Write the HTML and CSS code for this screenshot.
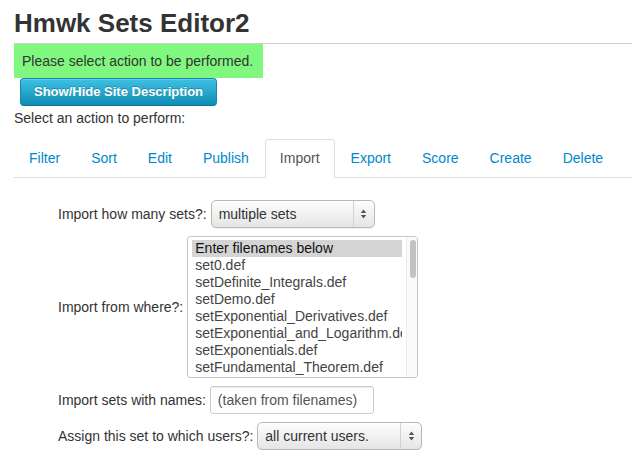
FILE: index.html
```html
<!DOCTYPE html>
<html>
<head>
<meta charset="utf-8">
<title>Hmwk Sets Editor2</title>
<link rel="stylesheet" href="styles.css">
</head>
<body>
<div class="page">
  <div class="header"><h1>Hmwk Sets Editor2</h1></div>
  <div class="message">Please select action to be performed.</div>
  <button class="btn-info" type="button">Show/Hide Site Description</button>
  <p class="intro">Select an action to perform:</p>
  <ul class="tabs">
    <li><a>Filter</a></li>
    <li><a>Sort</a></li>
    <li><a>Edit</a></li>
    <li><a>Publish</a></li>
    <li class="active"><a>Import</a></li>
    <li><a>Export</a></li>
    <li><a>Score</a></li>
    <li><a>Create</a></li>
    <li><a>Delete</a></li>
  </ul>
  <div class="form">
    <div class="row">
      <span class="label">Import how many sets?:</span>
      <div class="select select-sets">
        <span class="select-text">multiple sets</span>
        <span class="select-arrows"><svg width="7" height="12" viewBox="0 0 7 12"><polygon points="3.5,1.5 6.2,5 0.8,5" fill="#555"/><polygon points="0.8,7 6.2,7 3.5,10.5" fill="#555"/></svg></span>
      </div>
    </div>
    <div class="row">
      <span class="label">Import from where?:</span>
      <div class="listbox">
        <div class="options">
          <div class="option selected">Enter filenames below</div>
          <div class="option">set0.def</div>
          <div class="option">setDefinite_Integrals.def</div>
          <div class="option">setDemo.def</div>
          <div class="option">setExponential_Derivatives.def</div>
          <div class="option">setExponential_and_Logarithm.def</div>
          <div class="option">setExponentials.def</div>
          <div class="option">setFundamental_Theorem.def</div>
        </div>
        <div class="scrollbar"><div class="thumb"></div></div>
      </div>
    </div>
    <div class="row">
      <span class="label">Import sets with names:</span>
      <div class="input">(taken from filenames)</div>
    </div>
    <div class="row">
      <span class="label">Assign this set to which users?:</span>
      <div class="select select-users">
        <span class="select-text">all current users.</span>
        <span class="select-arrows"><svg width="7" height="12" viewBox="0 0 7 12"><polygon points="3.5,1.5 6.2,5 0.8,5" fill="#555"/><polygon points="0.8,7 6.2,7 3.5,10.5" fill="#555"/></svg></span>
      </div>
    </div>
  </div>
</div>
</body>
</html>
```
FILE: styles.css
```css
html, body {
  margin: 0;
  padding: 0;
  background: #fff;
}
body {
  font-family: "Liberation Sans", Arial, Helvetica, sans-serif;
  font-size: 14px;
  line-height: 20px;
  color: #333;
}
.page {
  padding-left: 14px;
}
.header {
  padding-top: 9px;
  padding-bottom: 5px;
  border-bottom: 1px solid #cfcfcf;
}
.header h1 {
  margin: 0;
  font-size: 26px;
  line-height: 29px;
  font-weight: bold;
  color: #333;
}
.message {
  display: inline-block;
  background: #80f880;
  padding: 7px 10px 7px 8px;
  color: #333;
  vertical-align: top;
}
.btn-info {
  display: block;
  margin: 0 0 0 6px;
  height: 28px;
  padding: 0 13px;
  font-family: "Liberation Sans", Arial, Helvetica, sans-serif;
  font-size: 13px;
  font-weight: bold;
  line-height: 26px;
  color: #fff;
  text-shadow: 0 -1px 0 rgba(0, 0, 0, 0.25);
  background: linear-gradient(to bottom, #3ec0e3, #0f8db4);
  border: 1px solid #1488ad;
  border-bottom-color: #0b7395;
  border-radius: 4px;
  box-shadow: inset 0 1px 0 rgba(255, 255, 255, 0.2);
}
.intro {
  margin: 2px 0 0;
}
.tabs {
  display: flex;
  list-style: none;
  margin: 11px 0 0;
  padding: 0;
  border-bottom: 1px solid #ddd;
}
.tabs li {
  margin: 0 1px -1px 0;
}
.tabs a {
  display: block;
  padding: 8px 14px 9px;
  line-height: 20px;
  border: 1px solid transparent;
  border-radius: 4px 4px 0 0;
  color: #0088cc;
}
.tabs .active a {
  border-color: #ddd;
  border-bottom-color: transparent;
  background: #fff;
  color: #555;
}
.form {
  margin-top: 22px;
  padding-left: 44px;
  display: flex;
  flex-direction: column;
  gap: 8px;
}
.row {
  display: flex;
  align-items: center;
  gap: 4px;
}
.label {
  color: #333;
  white-space: nowrap;
}
.select {
  box-sizing: border-box;
  height: 28px;
  display: flex;
  align-items: stretch;
  border: 1px solid #b8b8b8;
  border-radius: 5px;
  background: linear-gradient(to bottom, #fdfdfd, #e5e5e5);
  box-shadow: 0 1px 1px rgba(0, 0, 0, 0.06);
}
.select-sets {
  width: 164px;
}
.select-users {
  width: 165px;
}
.select-text {
  flex: 1;
  padding-left: 7px;
  line-height: 26px;
  color: #333;
  white-space: nowrap;
  overflow: hidden;
}
.select-arrows {
  width: 20px;
  border-left: 1px solid #d2d2d2;
  display: flex;
  align-items: center;
  justify-content: center;
}
.listbox {
  box-sizing: border-box;
  width: 231px;
  height: 142px;
  display: flex;
  border: 1px solid #c6c6c6;
  border-radius: 3px;
  background: #fff;
  overflow: hidden;
}
.options {
  width: 210px;
  padding: 3px 4px 0 4px;
  overflow: hidden;
}
.option {
  height: 17px;
  line-height: 17px;
  padding: 0 3px;
  white-space: nowrap;
  overflow: hidden;
  color: #444;
}
.option.selected {
  background: #d4d4d4;
  color: #111;
}
.scrollbar {
  flex: 1;
  border-left: 1px solid #ececec;
  background: #fafafa;
}
.thumb {
  width: 6px;
  height: 38px;
  margin: 3px 0 0 3px;
  border-radius: 3px;
  background: #c2c2c2;
}
.input {
  box-sizing: border-box;
  width: 164px;
  height: 28px;
  padding: 0 7px;
  line-height: 26px;
  border: 1px solid #ccc;
  border-radius: 3px;
  box-shadow: inset 0 1px 1px rgba(0, 0, 0, 0.075);
  color: #555;
  white-space: nowrap;
}
```
